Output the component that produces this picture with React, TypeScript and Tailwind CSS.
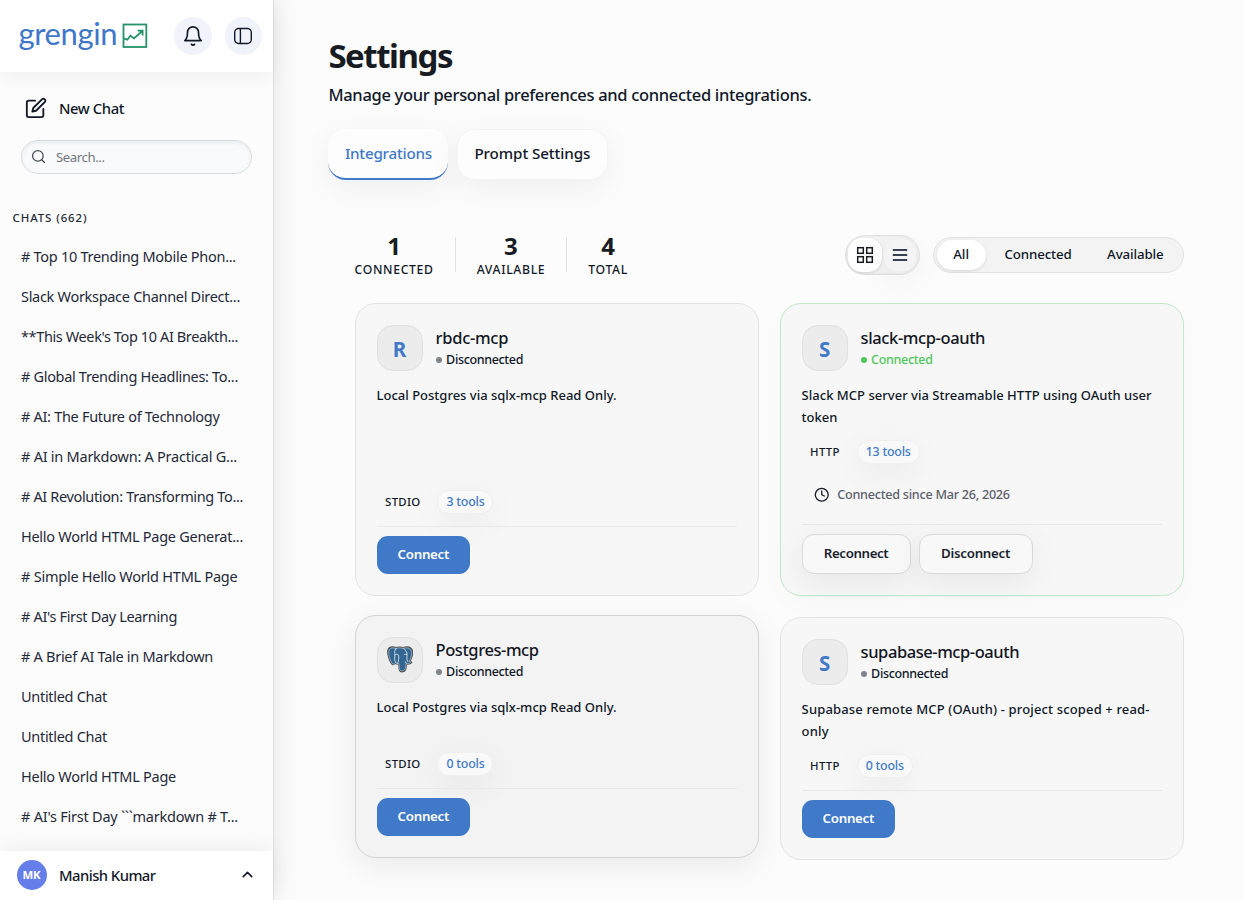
import type { ReactNode } from "react";

const chats: { title: string; tracking: string }[] = [
  { title: "# Top 10 Trending Mobile Phon...", tracking: "tracking-[-0.0192em]" },
  { title: "Slack Workspace Channel Direct...", tracking: "tracking-[-0.0206em]" },
  { title: "**This Week's Top 10 AI Breakth...", tracking: "tracking-[-0.0267em]" },
  { title: "# Global Trending Headlines: To...", tracking: "tracking-[-0.0222em]" },
  { title: "# AI: The Future of Technology", tracking: "tracking-[-0.0207em]" },
  { title: "# AI in Markdown: A Practical G...", tracking: "tracking-[-0.017em]" },
  { title: "# AI Revolution: Transforming To...", tracking: "tracking-[-0.0245em]" },
  { title: "Hello World HTML Page Generat...", tracking: "tracking-[-0.0195em]" },
  { title: "# Simple Hello World HTML Page", tracking: "tracking-[-0.0165em]" },
  { title: "# AI's First Day Learning", tracking: "tracking-[-0.0233em]" },
  { title: "# A Brief AI Tale in Markdown", tracking: "tracking-[-0.0195em]" },
  { title: "Untitled Chat", tracking: "tracking-[-0.0206em]" },
  { title: "Untitled Chat", tracking: "tracking-[-0.0206em]" },
  { title: "Hello World HTML Page", tracking: "tracking-[-0.0186em]" },
  { title: "# AI's First Day ```markdown # T...", tracking: "tracking-[-0.016em]" },
];

function BellIcon() {
  return (
    <svg width="22" height="22" viewBox="0 0 24 24" fill="none" stroke="currentColor" strokeWidth="1.8" strokeLinecap="round" strokeLinejoin="round">
      <path d="M6 8a6 6 0 0 1 12 0c0 7 3 9 3 9H3s3-2 3-9" />
      <path d="M10.3 21a1.94 1.94 0 0 0 3.4 0" />
    </svg>
  );
}

function PanelIcon() {
  return (
    <svg width="20" height="20" viewBox="0 0 20 20" fill="none" stroke="currentColor" strokeWidth="1.4">
      <rect x="1.7" y="2.5" width="16.6" height="15" rx="4" />
      <path d="M7.4 2.5v15" />
    </svg>
  );
}

function EditIcon() {
  return (
    <svg width="22" height="22" viewBox="0 0 24 24" fill="none" stroke="currentColor" strokeWidth="2" strokeLinecap="round" strokeLinejoin="round">
      <path d="M11 4H4a2 2 0 0 0-2 2v14a2 2 0 0 0 2 2h14a2 2 0 0 0 2-2v-7" />
      <path d="M18.5 2.5a2.121 2.121 0 0 1 3 3L12 15l-4 1 1-4 9.5-9.5z" />
    </svg>
  );
}

function PostgresLogo() {
  return (
    <svg className="mb-[3px]" width="26" height="27" viewBox="0 0 27 28" strokeLinejoin="round" strokeLinecap="round">
      <path
        d="M9 1.6C6 .6 3 .8 1.6 2.8.2 5 .8 9 2 12.6c1 3 2.2 6.2 4 6.7 1 .3 2-.6 2.8-1.5.8.7 2 .9 3.3.7.5 1.5.3 3.5.5 5.2.3 2.2 1.6 3.3 3.6 3 2.3-.3 3.2-1.7 3.5-4l.5-4c1.9.3 4.3-.2 5.3-1.5.5-.8-.6-.9-2.1-.8 2-3.2 3.4-7 3.1-10.2C26.2 2.8 23.5 1 20.4 1c-1.3 0-2.2.3-3.4.6C14.3.9 11.5.8 9 1.6z"
        fill="#336791"
        stroke="#4a4a4a"
        strokeWidth="1.3"
      />
      <path
        d="M9 1.6C6 .6 3 .8 1.6 2.8.2 5 .8 9 2 12.6c1 3 2.2 6.2 4 6.7 1 .3 2-.6 2.8-1.5.8.7 2 .9 3.3.7.5 1.5.3 3.5.5 5.2.3 2.2 1.6 3.3 3.6 3 2.3-.3 3.2-1.7 3.5-4l.5-4c1.9.3 4.3-.2 5.3-1.5.5-.8-.6-.9-2.1-.8 2-3.2 3.4-7 3.1-10.2C26.2 2.8 23.5 1 20.4 1c-1.3 0-2.2.3-3.4.6C14.3.9 11.5.8 9 1.6z"
        fill="#336791"
        stroke="#d5dde4"
        strokeWidth=".6"
        transform="translate(.95 .95) scale(.93)"
      />
      <path d="M9.3 2.6C7.5 4.8 8 7.5 8.2 9.6c.2 2.7-1.2 5 .8 7.6M17.2 2.4c2.2 1.5 3.6 4.2 3.7 6.4.1 2.6-1 4.2.5 7.2M8.3 9.2c1.2-.9 2.8-.9 3.5 0 .7 1.1.4 3 .3 4.5-.1 1.5-.5 3-.9 4.2M20.6 8.8c-1-.5-2-.4-2.6.1M20 17.7c-.6-.2-1-.6-1-1.3" fill="none" stroke="#fff" strokeWidth=".75" />
    </svg>
  );
}

function Tile({ children }: { children: ReactNode }) {
  return (
    <div className="flex size-[46px] shrink-0 items-center justify-center rounded-2xl border border-[#e0e0e0] bg-[#ececec] pt-[2px] text-[20.5px] leading-none font-bold text-[#4079c7]">
      {children}
    </div>
  );
}

type CardProps = {
  icon: ReactNode;
  name: ReactNode;
  connected?: boolean;
  description: ReactNode;
  transport: string;
  tools: string;
  children: ReactNode;
  since?: ReactNode;
  className: string;
};

function Card({ icon, name, connected, description, transport, tools, children, since, className }: CardProps) {
  return (
    <article className={`flex flex-col rounded-[21px] border px-[21px] pt-[21px] pb-[21px] ${className}`}>
      <header className="flex h-[46px] gap-[13px]">
        <Tile>{icon}</Tile>
        <div className="flex flex-col pt-[2px]">
          <h3 className="text-[16.5px] leading-[22px] font-medium whitespace-nowrap text-[#12161f]">{name}</h3>
          <div className={connected ? "flex items-center gap-1 text-[12.5px] leading-[22px] font-medium tracking-[-0.0247em] text-[#4fc65c]" : "flex items-center gap-1 text-[12.5px] leading-[22px] font-medium tracking-[-0.0272em] text-[#101828]"}>
            <span className={connected ? "size-[6.5px] rounded-full bg-[#4fc65c]" : "size-[6.5px] rounded-full bg-[#80858d]"} />
            {connected ? "Connected" : "Disconnected"}
          </div>
        </div>
      </header>
      <div className="mt-[13px] text-[13px] leading-[22px] font-medium whitespace-nowrap text-[#101828]">{description}</div>
      <div className="mt-auto flex h-6 items-center">
        <span className="pr-[17px] pl-[8.5px] text-[11.4px] font-medium tracking-[0.025em] text-[#101828]">{transport}</span>
        <span className="flex h-6 items-center rounded-full border border-[#efefef] bg-[#f9f9f9] px-2 pt-[2px] text-[12.4px] font-medium tracking-[-0.018em] text-[#4079c7] shadow-[0_8px_32px_rgba(0,0,0,0.06)]">
          {tools}
        </span>
      </div>
      {since}
      <footer className="mt-3 flex gap-2 border-t border-[#e8e8e8] pt-[9px]">{children}</footer>
    </article>
  );
}

function ConnectButton() {
  return (
    <button className="h-[38px] w-[93.5px] rounded-[11px] bg-[#4079c7] pt-[1.5px] text-[13.3px] font-semibold tracking-[-0.0217em] text-white">
      Connect
    </button>
  );
}

function Sidebar() {
  return (
    <aside className="relative z-10 flex h-full w-[274px] shrink-0 flex-col border-r border-[#dfdfe1] bg-[#fcfcfd] shadow-[4px_0_24px_rgba(0,0,0,0.08)]">
      <div className="relative flex h-[71.5px] shrink-0 items-center bg-white pl-[18.5px] shadow-[0_6px_18px_rgba(0,0,0,0.05)]">
        <span className="w-[103px] pb-[5px] font-['Lato',sans-serif] text-[31px] leading-[38px] tracking-[-0.012em] text-[#3f78c9]">grengin</span>
        <svg className="shrink-0" width="26" height="26" viewBox="0 0 26 26" fill="none" stroke="#259268" strokeWidth="1.8">
          <rect x="1.5" y="1.5" width="22.8" height="22.5" />
          <path d="M2 15.4l3.3 1.3 3.2-3.9 3.5 2.6L20.3 8M15.6 7.6h5v4.9" />
        </svg>
        <button className="ml-[26.5px] flex size-[37.5px] items-center justify-center rounded-full bg-[#f0f3f9] text-[#111827]">
          <BellIcon />
        </button>
        <button className="ml-[13px] flex size-[37.5px] items-center justify-center rounded-full bg-[#f0f3f9] text-[#111827]">
          <PanelIcon />
        </button>
      </div>

      <button className="mt-[24.5px] flex h-6 items-center pl-[24.5px] text-[14.8px] font-medium tracking-[-0.0277em] text-[#111827]">
        <EditIcon />
        <span className="ml-[12.5px]">New Chat</span>
      </button>

      <div className="mt-[19.5px] ml-[21px] flex h-[34px] w-[230.5px] items-center rounded-full border border-[#d9dcdf] bg-[#f9fafb] pl-[8.5px] text-[13.2px] tracking-[-0.0324em] text-[#71767f] shadow-[inset_0_2px_4px_rgba(0,0,0,0.06)]">
        <svg width="15" height="15" viewBox="0 0 24 24" fill="none" stroke="#414853" strokeWidth="2" strokeLinecap="round">
          <circle cx="11" cy="11" r="8.5" />
          <path d="m21.5 21.5-4.3-4.3" />
        </svg>
        <span className="ml-[10.5px] pt-[3.5px]">Search...</span>
      </div>

      <h2 className="mt-[34.5px] pl-[12.5px] text-[11.4px] leading-5 font-medium tracking-[0.0821em] text-[#1f2937]">CHATS (662)</h2>
      <ul className="mt-[9px] flex flex-col">
        {chats.map((chat, i) => (
          <li key={i} className={`h-10 pl-[21px] text-[14.5px] leading-[39px] whitespace-nowrap text-[#1f2937] ${chat.tracking}`}>
            {chat.title}
          </li>
        ))}
      </ul>

      <div className="relative mt-auto flex h-[49px] shrink-0 items-center bg-white pb-px pl-[16.5px] shadow-[0_-6px_18px_rgba(0,0,0,0.05)]">
        <span className="flex size-[30px] items-center justify-center rounded-full bg-[#667eea] text-[11.4px] font-bold tracking-[-0.0137em] text-white">MK</span>
        <span className="ml-[12.5px] pt-px text-[14.8px] font-medium tracking-[-0.0367em] text-[#111827]">Manish Kumar</span>
        <svg className="mr-[17px] mb-px ml-auto" width="17" height="17" viewBox="0 0 24 24" fill="none" stroke="#111827" strokeWidth="2.2" strokeLinecap="round" strokeLinejoin="round">
          <path d="m18 15-6-6-6 6" />
        </svg>
      </div>
    </aside>
  );
}

function Stat({ value, label, tracking }: { value: string; label: string; tracking: string }) {
  return (
    <div className="flex flex-col items-center pt-[4px]">
      <span className="text-2xl leading-[26px] font-bold text-[#171b22]">{value}</span>
      <span className={`text-[12.2px] leading-[22px] font-medium text-[#101828] ${tracking}`}>{label}</span>
    </div>
  );
}

export default function App() {
  return (
    <div className="flex h-[900px] w-[1244px] overflow-hidden bg-[#fcfcfc] font-['Noto_Sans',sans-serif]">
      <Sidebar />
      <main className="flex-1 pr-[60px] pl-[54.4px]">
        <h1 className="pt-[36px] text-[33px] leading-10 font-bold tracking-[-0.044em] text-[#171b22]">Settings</h1>
        <p className="mt-[6px] text-[16.5px] leading-[26px] font-medium tracking-[-0.019em] text-[#101828]">
          Manage your personal preferences and connected integrations.
        </p>

        <nav className="mt-[20.5px] flex gap-[8.5px] text-[15.2px] font-medium">
          <button className="h-[51.5px] w-[120px] rounded-[18px] border-b-2 border-[#4079c7] bg-[#fdfdfd] tracking-[-0.0152em] text-[#4079c7] shadow-[0_8px_32px_rgba(0,0,0,0.06)]">
            Integrations
          </button>
          <button className="h-[51.5px] w-[151px] rounded-[18px] border border-[#f4f4f4] bg-[#fdfdfd] pb-[2px] tracking-[-0.006em] text-[#101828] shadow-[0_8px_32px_rgba(0,0,0,0.06)]">
            Prompt Settings
          </button>
        </nav>

        <section className="ml-[26.2px] w-[829px]">
          <div className="mt-[50.5px] flex h-[48px] items-center">
            <Stat value="1" label="CONNECTED" tracking="tracking-[0.055em]" />
            <span className="mx-[21px] h-[35px] w-px bg-[#e2e2e2]" />
            <Stat value="3" label="AVAILABLE" tracking="tracking-[0.055em]" />
            <span className="mx-[21px] h-[35px] w-px bg-[#e2e2e2]" />
            <Stat value="4" label="TOTAL" tracking="tracking-[0.055em]" />

            <div className="ml-auto flex h-10 w-[75px] items-center justify-between rounded-[20px] border border-[#e2e2e2] bg-[#f3f3f3] px-[2px] shadow-[inset_0_0_0_1px_rgba(0,0,0,0.02)]">
              <button className="flex size-[34px] items-center justify-center rounded-[14px] bg-white text-[#171b22] shadow-[0_1px_3px_rgba(0,0,0,0.14)]">
                <svg width="18" height="18" viewBox="0 0 18 18" fill="none" stroke="currentColor" strokeWidth="1.5">
                  <rect x="1.7" y="1.7" width="5.6" height="5.6" />
                  <rect x="10.7" y="1.7" width="5.6" height="5.6" />
                  <rect x="1.7" y="10.7" width="5.6" height="5.6" />
                  <rect x="10.7" y="10.7" width="5.6" height="5.6" />
                </svg>
              </button>
              <button className="flex size-[34px] items-center justify-center rounded-[14px] border border-[#eeeeee] bg-[#f4f4f4] text-[#374151] shadow-[0_8px_32px_rgba(0,0,0,0.06)]">
                <svg width="16" height="14" viewBox="0 0 16 14" stroke="currentColor" strokeWidth="1.8">
                  <path d="M.8 2h14.4M.8 7h14.4M.8 12h14.4" />
                </svg>
              </button>
            </div>
            <div className="ml-[13px] flex h-9 w-[250.5px] items-center justify-between rounded-full border border-[#e2e2e2] bg-[#f3f3f3] px-[2.5px] text-[13.3px] font-medium text-[#101828]">
              <button className="h-[30px] w-[49px] rounded-full bg-white pt-[1.5px] shadow-[0_1px_3px_rgba(0,0,0,0.12)]">All</button>
              <button className="h-[30px] w-[100px] pt-[1.5px] tracking-[-0.0115em]">Connected</button>
              <button className="h-[30px] w-[89.5px] pt-[1.5px] tracking-[-0.009em]">Available</button>
            </div>
          </div>

          <div className="mt-[24.5px] grid grid-cols-2 gap-x-[21px] gap-y-[21.5px]">
            <Card
              className="h-[292.5px] border-[#e3e3e3] bg-[#f7f7f7]"
              icon="R"
              name={<span className="tracking-[-0.0174em]">rbdc-mcp</span>}
              description="Local Postgres via sqlx-mcp Read Only."
              transport="STDIO"
              tools="3 tools"
            >
              <ConnectButton />
            </Card>
            <Card
              className="h-[292.5px] border-[#c1e8c7] bg-[#f7f7f7] shadow-[0_8px_32px_rgba(0,0,0,0.02)]"
              icon="S"
              name={<span className="tracking-[-0.0235em]">slack-mcp-oauth</span>}
              connected
              description={<p className="tracking-[0.0019em]">Slack MCP server via Streamable HTTP using OAuth user<br />token</p>}
              transport="HTTP"
              tools="13 tools"
              since={
                <div className="mt-[19px] mb-[5px] flex h-6 items-center pl-[12.2px] text-[12.6px] font-medium tracking-[-0.0197em] text-[#5b606a]">
                  <svg width="15.5" height="15.5" viewBox="0 0 24 24" fill="none" stroke="#171b2a" strokeWidth="2" strokeLinecap="round" strokeLinejoin="round">
                    <circle cx="12" cy="12" r="10" />
                    <path d="M12 6v6l4 2" />
                  </svg>
                  <span className="ml-2 pt-[1.5px]">Connected since Mar 26, 2026</span>
                </div>
              }
            >
              <button className="h-10 w-[109px] rounded-[12px] border border-[#d9d9d9] bg-[#f8f8f8] pt-[1.5px] text-[13.3px] font-semibold tracking-[-0.0295em] text-[#1a1f2e] shadow-[0_8px_32px_rgba(0,0,0,0.07)]">
                Reconnect
              </button>
              <button className="h-10 w-[114px] rounded-[12px] border border-[#d9d9d9] bg-[#f8f8f8] pt-[1.5px] text-[13.3px] font-semibold tracking-[-0.0207em] text-[#1a1f2e] shadow-[0_8px_32px_rgba(0,0,0,0.07)]">
                Disconnect
              </button>
            </Card>
            <Card
              className="h-[242.5px] -translate-y-[2px] border-[#d3d3d3] bg-[#f3f3f3] shadow-[0_8px_32px_rgba(0,0,0,0.08)]"
              icon={<PostgresLogo />}
              name={<span className="tracking-[-0.0258em]">Postgres-mcp</span>}
              description="Local Postgres via sqlx-mcp Read Only."
              transport="STDIO"
              tools="0 tools"
            >
              <ConnectButton />
            </Card>
            <Card
              className="h-[242.5px] border-[#e3e3e3] bg-[#f7f7f7]"
              icon="S"
              name={<span className="tracking-[-0.0262em]">supabase-mcp-oauth</span>}
              description={<p className="tracking-[0.0115em]">Supabase remote MCP (OAuth) - project scoped + read-<br />only</p>}
              transport="HTTP"
              tools="0 tools"
            >
              <ConnectButton />
            </Card>
          </div>
        </section>
      </main>
    </div>
  );
}
